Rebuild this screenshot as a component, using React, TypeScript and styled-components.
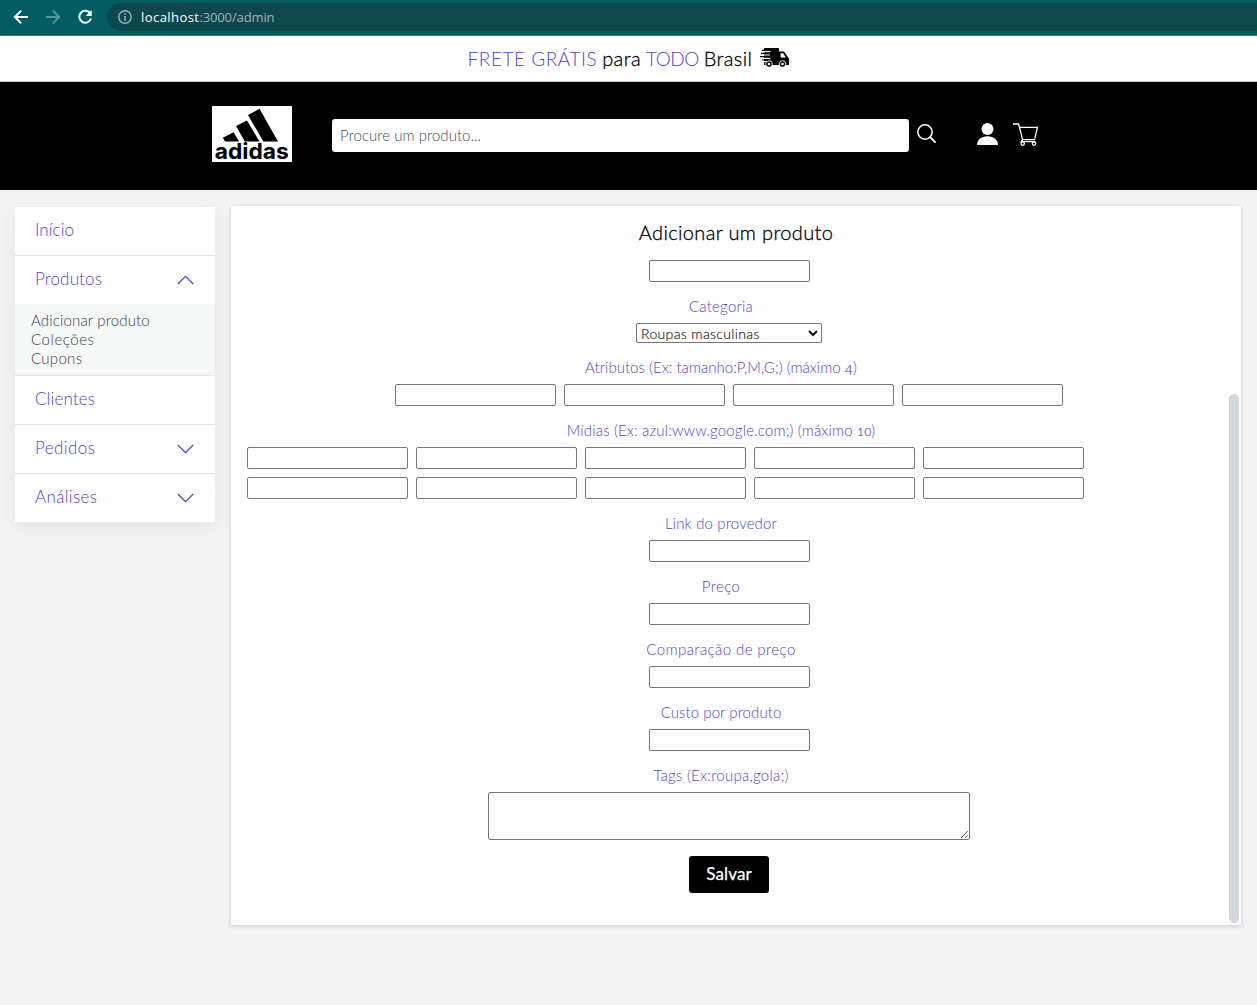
import React from "react";
import styled, { createGlobalStyle } from "styled-components";

const PURPLE = "#5843c4";

const GlobalStyle = createGlobalStyle`
  *, *::before, *::after { box-sizing: border-box; }
  body {
    margin: 0;
    background: #f2f2f2;
    font-family: Lato, "Open Sans", sans-serif;
    font-weight: 300;
  }
  input, select, textarea, button { font-family: inherit; margin: 0; }
`;

const Tracked = styled.span<{ $ls: number }>`
  letter-spacing: ${(p) => p.$ls}px;
  white-space: nowrap;
`;

const Page = styled.div`
  min-height: 1005px;
  display: flex;
  flex-direction: column;
`;

const BrowserBar = styled.div`
  height: 36px;
  display: flex;
  align-items: center;
  background: #035c61;
  border-bottom: 1px solid #3b7a7f;
  padding-left: 13px;
`;

const NavIcon = styled.svg<{ $dim?: boolean }>`
  width: 16px;
  height: 16px;
  margin: -1px 16px 0 0;
  fill: none;
  stroke: ${(p) => (p.$dim ? "#5f9598" : "#fff")};
  stroke-width: 2;
`;

const AddressBar = styled.div`
  flex: 1;
  height: 28px;
  margin: -1px 0 0 -2px;
  padding-left: 11px;
  display: flex;
  align-items: center;
  border-radius: 14px 0 0 14px;
  background: #0e474c;
  color: #9db5b7;
  font: 400 13px "Open Sans", sans-serif;
`;

const InfoIcon = styled.svg`
  width: 14px;
  height: 14px;
  margin-right: 9px;
`;

const Host = styled(Tracked)`
  color: #fff;
`;

const Banner = styled.div`
  height: 46px;
  display: flex;
  align-items: center;
  justify-content: center;
  gap: 5px;
  padding-bottom: 1px;
  background: #fff;
  border-bottom: 1px solid #c4c4c4;
  color: #000;
  font-size: 19px;
`;

const Strong = styled(Tracked)`
  font-size: 20px;
  -webkit-text-stroke: 0.3px #000;
`;

const Accent = styled(Tracked)`
  color: ${PURPLE};
`;

const Truck = styled.svg`
  width: 29px;
  height: 20px;
  margin-left: 3px;
`;

const Header = styled.header`
  height: 108px;
  display: flex;
  align-items: flex-start;
  padding: 24px 0 0 212px;
  background: #000;
`;

const Logo = styled.svg`
  width: 80px;
  height: 56px;
  margin-right: 40px;
`;

const SearchInput = styled.input`
  width: 577px;
  height: 33px;
  margin-top: 13px;
  padding: 0 8px 1px;
  border: 0;
  border-radius: 3px;
  background: #fff;
  font-size: 15px;
  font-weight: 300;
  &::placeholder { color: #4c4c4c; letter-spacing: 0.04px; opacity: 1; }
`;

const HeaderIcon = styled.svg<{ $w: number; $h: number; $left: number; $top: number }>`
  width: ${(p) => p.$w}px;
  height: ${(p) => p.$h}px;
  margin: ${(p) => p.$top}px 0 0 ${(p) => p.$left}px;
`;

const Main = styled.main`
  display: flex;
  align-items: flex-start;
  gap: 16px;
  padding: 16px 16px 0 15px;
`;

const Sidebar = styled.nav`
  width: 200px;
  margin-top: 1px;
  background: #fff;
  box-shadow: 0 5px 15px rgba(0, 0, 0, 0.06);
`;

const MenuSection = styled.div`
  & + & { border-top: 1px solid #dfe1e2; }
`;

const MenuItem = styled.a`
  height: 48px;
  padding: 0 21px 3px 20px;
  display: flex;
  align-items: center;
  justify-content: space-between;
  color: ${PURPLE};
  font-size: 17px;
`;

const Chevron = styled.svg<{ $up?: boolean }>`
  width: 17px;
  height: 10px;
  margin-top: 3px;
  fill: none;
  stroke: ${PURPLE};
  stroke-width: 1.3;
  transform: ${(p) => (p.$up ? "rotate(180deg)" : "none")};
`;

const Submenu = styled.div`
  height: 71px;
  padding: 7px 16px;
  display: flex;
  flex-direction: column;
  background: #f6f8f8;
  color: #3c4147;
  font-size: 15px;
  line-height: 19px;
`;

const Panel = styled.section`
  flex: 1;
  height: 719px;
  display: flex;
  padding: 16px 2px 2px 16px;
  background: #fff;
  box-shadow: 0 1px 4px rgba(40, 40, 80, 0.2);
`;

const Form = styled.form`
  width: 964px;
  display: flex;
  flex-direction: column;
  align-items: center;
`;

const Title = styled.h1`
  height: 22px;
  margin: 0 0 16px 14px;
  color: #000;
  font-size: 20px;
  font-weight: 300;
  line-height: 21px;
  -webkit-text-stroke: 0.3px #000;
`;

const Field = styled.div`
  width: 100%;
  display: flex;
  flex-direction: column;
  align-items: center;
  margin-bottom: 16px;
`;

const Label = styled.label`
  height: 18px;
  margin: 0 16px 7px 0;
  color: ${PURPLE};
  font-size: 15px;
  line-height: 16px;
`;

const OldStyle = styled.span<{ $drop?: boolean }>`
  display: inline-block;
  font-size: ${(p) => (p.$drop ? 14 : 12)}px;
  line-height: 12px;
  -webkit-text-stroke: 0.2px ${PURPLE};
  transform: ${(p) => (p.$drop ? "translateY(2px)" : "none")};
`;

const InputRow = styled.div<{ $full?: boolean }>`
  width: ${(p) => (p.$full ? "100%" : "auto")};
  display: flex;
  flex-wrap: wrap;
  gap: 8px;
  padding-right: ${(p) => (p.$full ? "110px" : "0")};
`;

const TextInput = styled.input`
  width: 161px;
  height: 22px;
  border: 1px solid #767676;
  border-radius: 2px;
  background: #fff;
`;

const Select = styled.select`
  width: 186px;
  height: 20px;
  padding: 0;
  border: 1px solid #767676;
  border-radius: 2px;
  background: #fff;
  color: #111;
  font-size: 14px;
  font-weight: 300;
  letter-spacing: 0.35px;
  -webkit-text-stroke: 0.15px #111;
`;

const TextArea = styled.textarea`
  width: 482px;
  height: 48px;
  border: 1px solid #767676;
  border-radius: 2px;
  background: #fff;
  resize: both;
`;

const SaveButton = styled.button`
  width: 80px;
  height: 37px;
  padding: 0 0 2px;
  border: 0;
  border-radius: 3px;
  background: #000;
  color: #fff;
  font-size: 17px;
  font-weight: 400;
  letter-spacing: 0.15px;
  -webkit-text-stroke: 0.25px #fff;
`;

const ScrollTrack = styled.div`
  margin-left: auto;
  display: flex;
  align-items: flex-end;
`;

const ScrollThumb = styled.div`
  width: 10px;
  height: 529px;
  border-radius: 5px;
  background: #cfd8df;
`;

const Arrow = ({ up }: { up?: boolean }) => (
  <Chevron $up={up} viewBox="0 0 17 10">
    <path d="M.8 1 8.5 8.6 16.2 1" />
  </Chevron>
);

const Inputs = ({ count, full }: { count: number; full?: boolean }) => (
  <InputRow $full={full}>
    {Array.from({ length: count }, (_, i) => (
      <TextInput key={i} />
    ))}
  </InputRow>
);

const pricing: [string, number][] = [
  ["Link do provedor", 0.16],
  ["Preço", 0.37],
  ["Comparação de preço", 0.41],
  ["Custo por produto", 0.08],
];

export default function App() {
  return (
    <Page>
      <GlobalStyle />
      <BrowserBar>
        <NavIcon viewBox="0 0 16 16"><path d="M15 8H2.2M8.2 1.6 1.8 8l6.4 6.4" /></NavIcon>
        <NavIcon $dim viewBox="0 0 16 16"><path d="M1 8h12.8M7.8 1.6 14.2 8l-6.4 6.4" /></NavIcon>
        <NavIcon viewBox="0 0 16 16">
          <path d="M13.4 4.6A6 6 0 1 0 14 9.5" />
          <path d="M14.7 1v6H8.8z" fill="#fff" stroke="none" />
        </NavIcon>
        <AddressBar>
          <InfoIcon viewBox="0 0 14 14">
            <circle cx="7" cy="7" r="6.2" fill="none" stroke="#9db5b7" strokeWidth="1.4" />
            <path d="M7 3.2v1.6M7 6v4.8" stroke="#9db5b7" strokeWidth="1.6" />
          </InfoIcon>
          <Host $ls={0.44}>localhost</Host>
          <Tracked $ls={-0.13}>:3000/admin</Tracked>
        </AddressBar>
      </BrowserBar>

      <Banner>
        <Accent $ls={0.53}>FRETE GRÁTIS</Accent>
        <Strong $ls={0.4}>para</Strong>
        <Accent $ls={-0.5}>TODO</Accent>
        <Strong $ls={0.4}>Brasil</Strong>
        <Truck viewBox="0 0 29 20">
          <path d="M4 .8Q4 0 5 0h13q1 0 1 1v2.6h4.4q.8 0 1.3.7l3.4 5.2q.4.6.9.8v6.2q0 .6-.7.6H4z" fill="#000" />
          <path d="M20.6 5.2h2.6l2.6 4.2h-5.2z" fill="#fff" />
          <path d="M3 3.6h7.5M1.5 7h8.5M3 10.4h7.5M4 13.6h3" stroke="#fff" strokeWidth="1.1" />
          <path d="M2 2.4h8M1 5.3h10M0 8.7h11M2 12h7" stroke="#000" strokeWidth="1.2" />
          <circle cx="9" cy="16" r="3.3" fill="#000" stroke="#fff" strokeWidth=".9" />
          <circle cx="22.5" cy="16" r="3.3" fill="#000" stroke="#fff" strokeWidth=".9" />
          <circle cx="9" cy="16" r="1.3" fill="#fff" />
          <circle cx="22.5" cy="16" r="1.3" fill="#fff" />
        </Truck>
      </Banner>

      <Header>
        <Logo viewBox="0 0 80 56">
          <rect width="80" height="56" fill="#fff" />
          <path d="M10.8 31.7 21.5 26.2 27.2 35.6H13z M24 20 35 14.5 47.5 35.6H32.8z M36 9 47.5 2.8 66 35.6H51.4z" fill="#000" />
          <text x="2.8" y="52.6" textLength="74" lengthAdjust="spacingAndGlyphs" fontFamily="Inter, sans-serif" fontWeight="700" fontSize="22">adidas</text>
        </Logo>
        <SearchInput placeholder="Procure um produto..." />
        <HeaderIcon $w={20} $h={20} $left={8} $top={18} viewBox="0 0 20 20" fill="none" stroke="#fff" strokeWidth="1.5">
          <circle cx="8" cy="8" r="7.2" />
          <path d="m13 13 5.6 5.6" strokeWidth="1.8" />
        </HeaderIcon>
        <HeaderIcon $w={21} $h={23} $left={40} $top={17} viewBox="0 0 21 23" fill="#fff">
          <circle cx="10.5" cy="6" r="6" />
          <path d="M0 22C0 17 4 13.2 10.5 13.2S21 17 21 22z" />
        </HeaderIcon>
        <HeaderIcon $w={26} $h={24} $left={15} $top={17} viewBox="0 0 26 24" fill="none" stroke="#fff" strokeWidth="1.3">
          <path d="M0 1h5.6l4 15.6h12.6M6.4 4.4h18l-2.6 11.3M9.6 16.6l-1.4 2h14" />
          <circle cx="9.7" cy="20.6" r="1.7" />
          <circle cx="21" cy="20.6" r="1.7" />
        </HeaderIcon>
      </Header>

      <Main>
        <Sidebar>
          <MenuSection>
            <MenuItem><Tracked $ls={0.05}>Início</Tracked></MenuItem>
          </MenuSection>
          <MenuSection>
            <MenuItem><Tracked $ls={0.15}>Produtos</Tracked><Arrow up /></MenuItem>
            <Submenu>
              <Tracked $ls={0.16}>Adicionar produto</Tracked>
              <Tracked $ls={0.57}>Coleções</Tracked>
              <Tracked $ls={0.3}>Cupons</Tracked>
            </Submenu>
          </MenuSection>
          <MenuSection>
            <MenuItem><Tracked $ls={0.13}>Clientes</Tracked></MenuItem>
          </MenuSection>
          <MenuSection>
            <MenuItem><Tracked $ls={0.43}>Pedidos</Tracked><Arrow /></MenuItem>
          </MenuSection>
          <MenuSection>
            <MenuItem><Tracked $ls={0.36}>Análises</Tracked><Arrow /></MenuItem>
          </MenuSection>
        </Sidebar>

        <Panel>
          <Form>
            <Title><Tracked $ls={0.35}>Adicionar um produto</Tracked></Title>
            <Field><TextInput /></Field>
            <Field>
              <Label><Tracked $ls={0.24}>Categoria</Tracked></Label>
              <Select defaultValue="m"><option value="m">Roupas masculinas</option></Select>
            </Field>
            <Field>
              <Label><Tracked $ls={0.03}>Atributos (Ex: tamanho:P,M,G;) (máximo <OldStyle $drop>4</OldStyle>)</Tracked></Label>
              <Inputs count={4} />
            </Field>
            <Field>
              <Label><Tracked $ls={0.16}>Mídias (Ex: azul:www.google.com;) (máximo <OldStyle>10</OldStyle>)</Tracked></Label>
              <Inputs count={10} full />
            </Field>
            {pricing.map(([text, ls]) => (
              <Field key={text}>
                <Label><Tracked $ls={ls}>{text}</Tracked></Label>
                <TextInput />
              </Field>
            ))}
            <Field>
              <Label><Tracked $ls={0.25}>Tags (Ex:roupa,gola;)</Tracked></Label>
              <TextArea />
            </Field>
            <SaveButton type="button">Salvar</SaveButton>
          </Form>
          <ScrollTrack><ScrollThumb /></ScrollTrack>
        </Panel>
      </Main>
    </Page>
  );
}
